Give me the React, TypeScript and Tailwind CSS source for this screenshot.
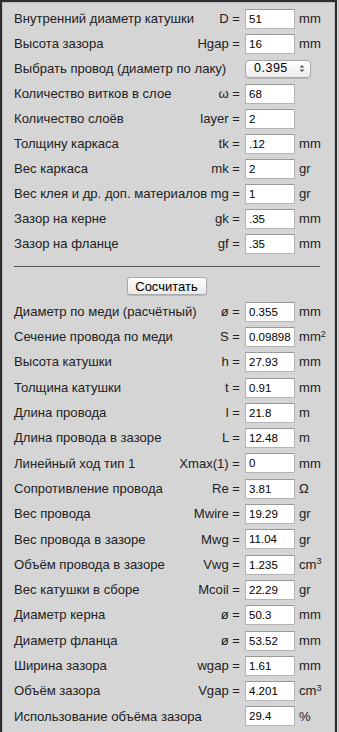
import React from "react";

type Row = { label: string; sym: string; value: string; unit: React.ReactNode };

const inputs: Row[] = [
  { label: "Внутренний диаметр катушки", sym: "D =", value: "51", unit: "mm" },
  { label: "Высота зазора", sym: "Hgap =", value: "16", unit: "mm" },
];

const inputs2: Row[] = [
  { label: "Количество витков в слое", sym: "ω =", value: "68", unit: "" },
  { label: "Количество слоёв", sym: "layer =", value: "2", unit: "" },
  { label: "Толщину каркаса", sym: "tk =", value: ".12", unit: "mm" },
  { label: "Вес каркаса", sym: "mk =", value: "2", unit: "gr" },
  { label: "Вес клея и др. доп. материалов", sym: "mg =", value: "1", unit: "gr" },
  { label: "Зазор на керне", sym: "gk =", value: ".35", unit: "mm" },
  { label: "Зазор на фланце", sym: "gf =", value: ".35", unit: "mm" },
];

const results: Row[] = [
  { label: "Диаметр по меди (расчётный)", sym: "ø =", value: "0.355", unit: "mm" },
  { label: "Сечение провода по меди", sym: "S =", value: "0.09898", unit: <>mm<sup className="text-[9px]">2</sup></> },
  { label: "Высота катушки", sym: "h =", value: "27.93", unit: "mm" },
  { label: "Толщина катушки", sym: "t =", value: "0.91", unit: "mm" },
  { label: "Длина провода", sym: "l =", value: "21.8", unit: "m" },
  { label: "Длина провода в зазоре", sym: "L =", value: "12.48", unit: "m" },
  { label: "Линейный ход тип 1", sym: "Xmax(1) =", value: "0", unit: "mm" },
  { label: "Сопротивление провода", sym: "Re =", value: "3.81", unit: "Ω" },
  { label: "Вес провода", sym: "Mwire =", value: "19.29", unit: "gr" },
  { label: "Вес провода в зазоре", sym: "Mwg =", value: "11.04", unit: "gr" },
  { label: "Объём провода в зазоре", sym: "Vwg =", value: "1.235", unit: <>cm<sup className="text-[9px]">3</sup></> },
  { label: "Вес катушки в сборе", sym: "Mcoil =", value: "22.29", unit: "gr" },
  { label: "Диаметр керна", sym: "ø =", value: "50.3", unit: "mm" },
  { label: "Диаметр фланца", sym: "ø =", value: "53.52", unit: "mm" },
  { label: "Ширина зазора", sym: "wgap =", value: "1.61", unit: "mm" },
  { label: "Объём зазора", sym: "Vgap =", value: "4.201", unit: <>cm<sup className="text-[9px]">3</sup></> },
  { label: "Использование объёма зазора", sym: "", value: "29.4", unit: "%" },
];

const Field = ({ row, tall }: { row: Row; tall?: boolean }) => (
  <div className={`flex items-center ${tall ? "h-[25.3px]" : "h-[25px]"}`}>
    <span className="flex-1 whitespace-nowrap">{row.label}</span>
    <span className="ml-[3px] shrink-0 whitespace-nowrap text-right">{row.sym}</span>
    <div className="ml-[5px] h-[20px] w-[50px] shrink-0 overflow-hidden border border-[#b4b4b4] border-t-[#9a9a9a] bg-white pl-[3px] text-[11.5px] leading-[18px] text-black">
      {row.value}
    </div>
    <span className="ml-[4px] w-[26px] shrink-0 whitespace-nowrap">{row.unit}</span>
  </div>
);

export default function App() {
  return (
    <div className="h-[732px] w-[339px] overflow-hidden bg-[#cfcfcf] font-['Liberation_Sans',Arial,sans-serif] text-[13.1px] text-[#222]">
      <div className="h-[740px] w-[337px] border-l-2 border-r-2 border-t-2 border-[#2e2e2e]">
        <div className="h-full border border-[#bababa] bg-[#d5d5d5] pl-[11px] pr-[9px] pt-[3px]">
          {inputs.map((r) => (
            <Field key={r.label} row={r} />
          ))}
          {/* wire select */}
          <div className="flex h-[25px] items-center">
            <span className="flex-1 whitespace-nowrap">Выбрать провод (диаметр по лаку)</span>
            <div className="flex h-[18px] w-[66px] items-center justify-between rounded-[4px] border border-[#a8a8a8] bg-gradient-to-b from-white to-[#ececec] pl-[8px] pr-[5px] text-[12.5px] leading-none text-black shadow-[0_1px_1px_rgba(0,0,0,0.15)]">
              <span className="tracking-[0.5px]">0.395</span>
              <svg width="6" height="9" viewBox="0 0 6 9">
                <path d="M0.5 3.5 L3 1 L5.5 3.5Z M0.5 5.5 L3 8 L5.5 5.5Z" fill="#555" />
              </svg>
            </div>
            <span className="w-[14px]" />
          </div>
          {inputs2.map((r) => (
            <Field key={r.label} row={r} />
          ))}

          <div className="mr-[5px] mt-[10px] border-t border-[#555]" />

          <div className="flex justify-center pr-[6px] pt-[10px]">
            <button className="h-[18px] w-[80px] rounded-[3px] border border-[#a9a9a9] bg-gradient-to-b from-white to-[#e9e9e9] text-[13px] leading-none text-black shadow-[0_1px_1px_rgba(0,0,0,0.15)]">
              Сосчитать
            </button>
          </div>

          <div className="pt-[4px]">
            {results.map((r) => (
              <Field key={r.label + r.value} row={r} tall />
            ))}
          </div>
        </div>
      </div>
    </div>
  );
}
